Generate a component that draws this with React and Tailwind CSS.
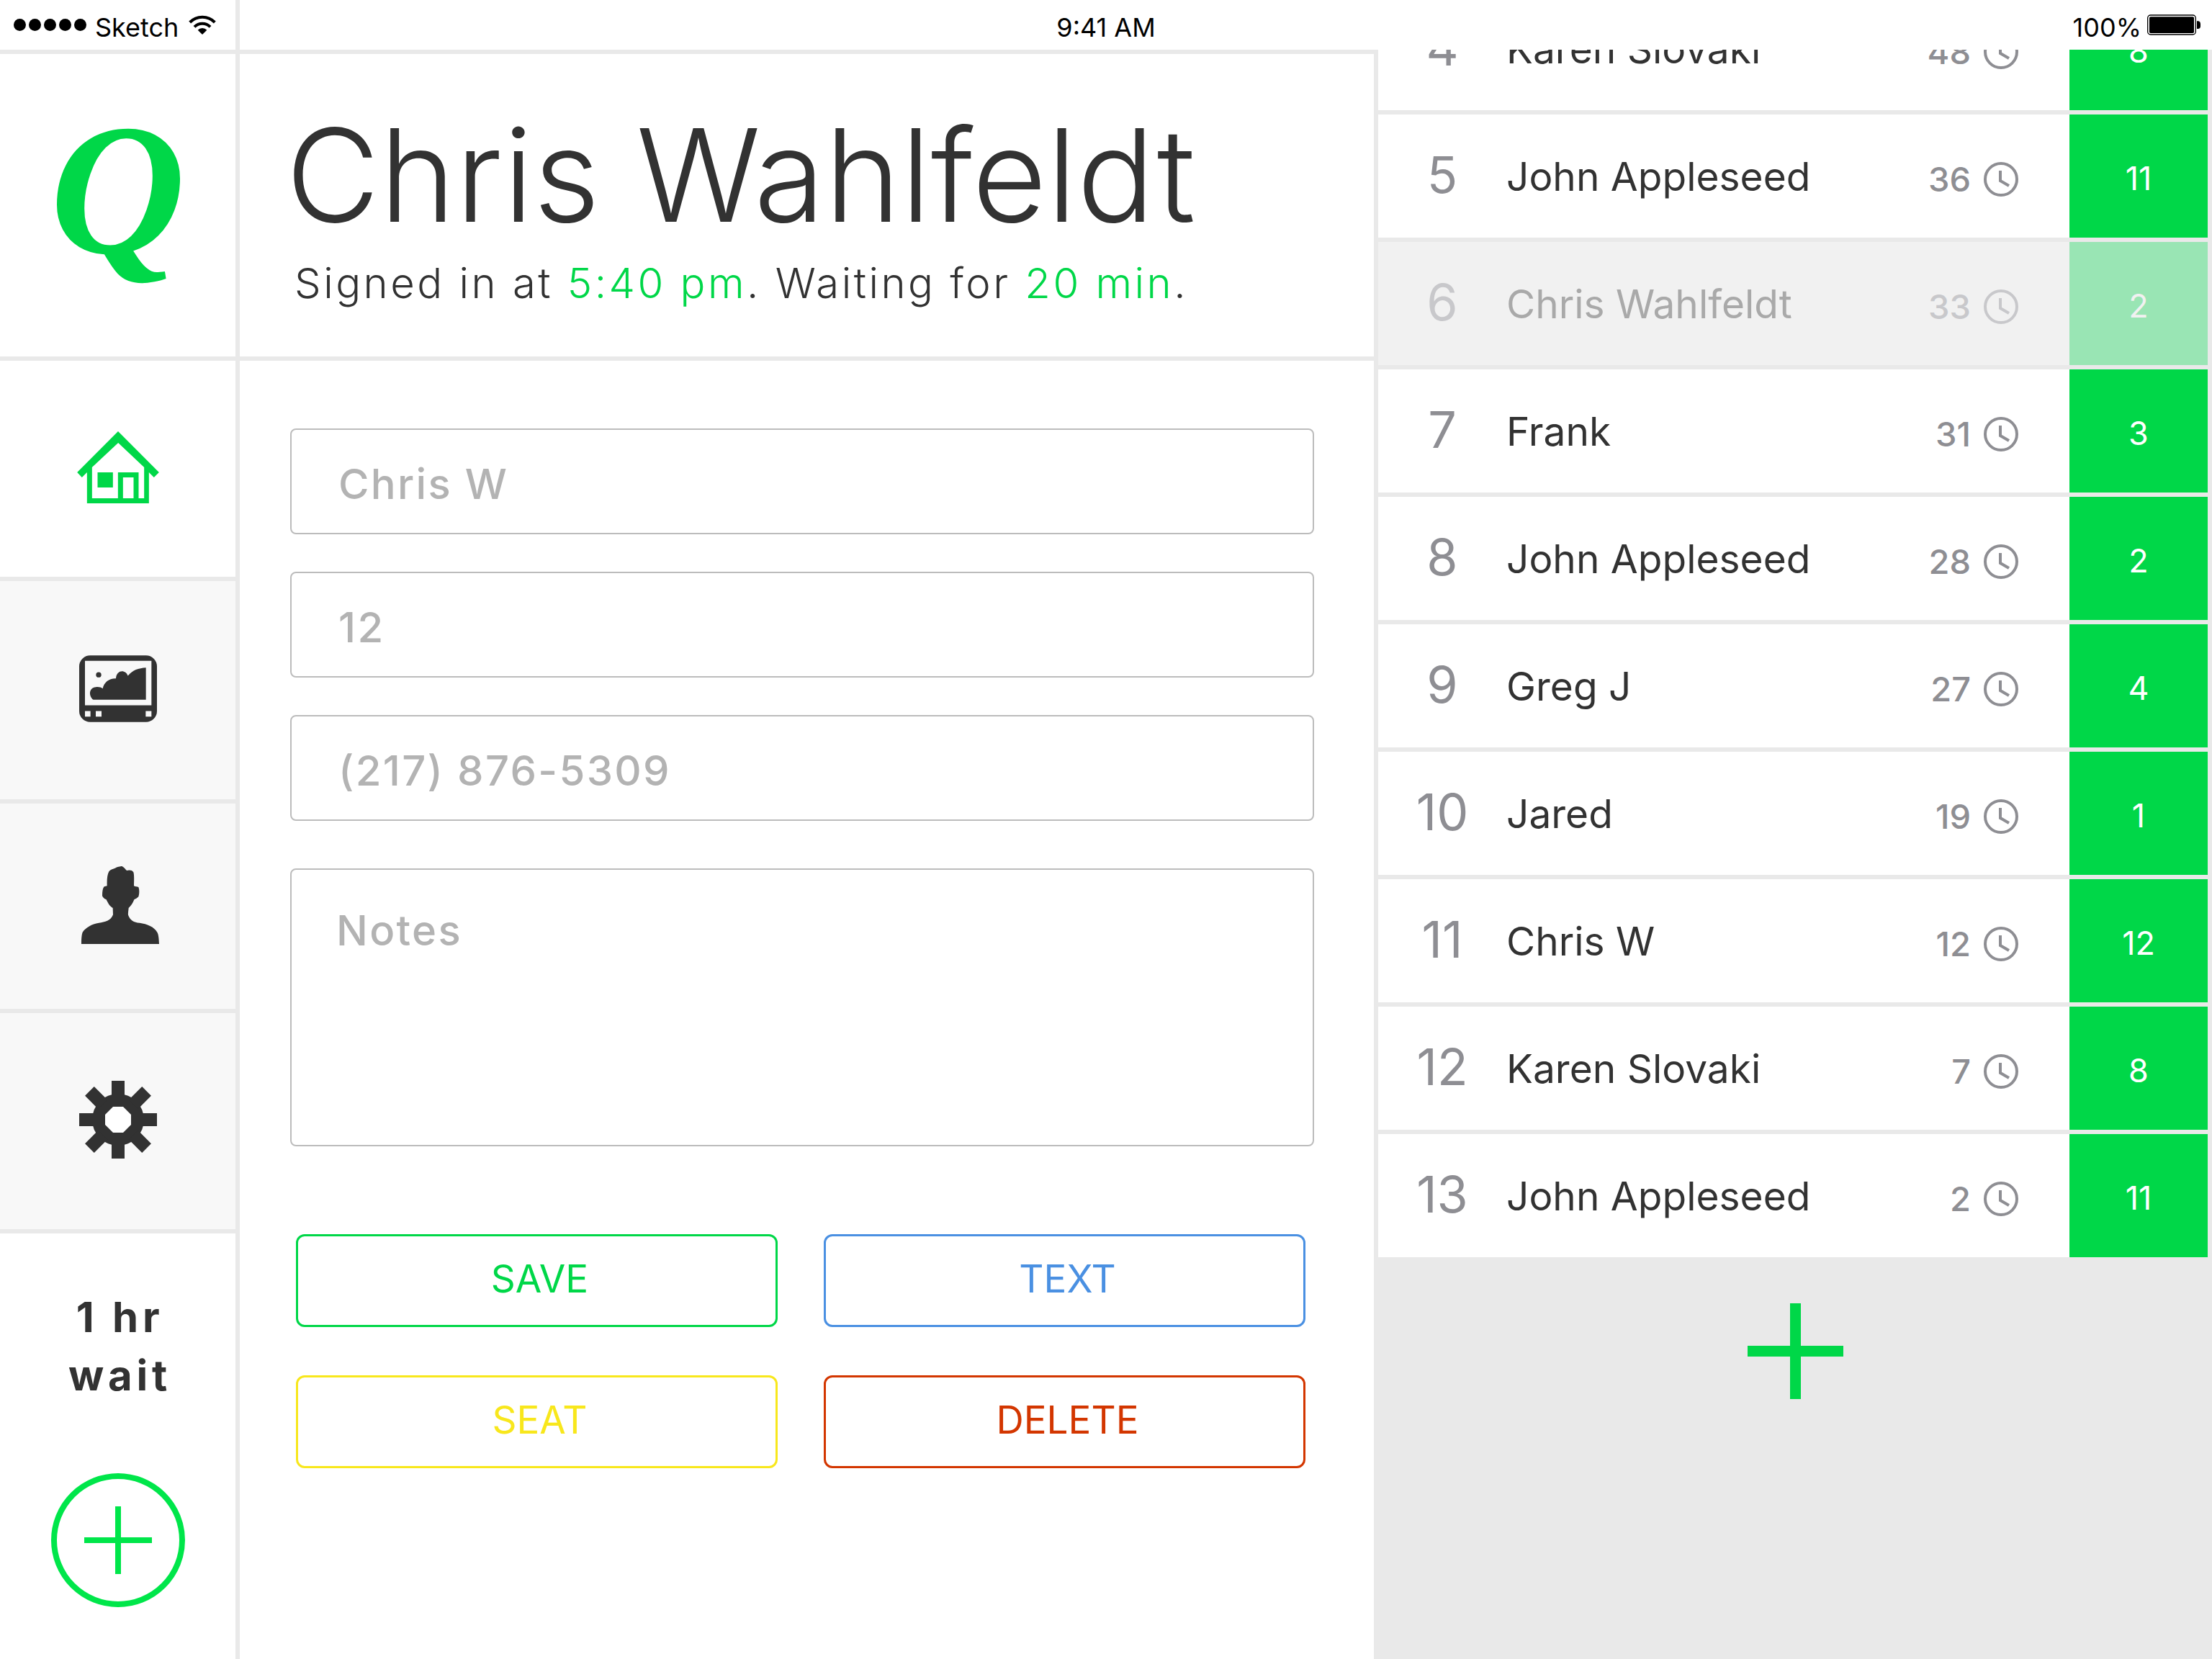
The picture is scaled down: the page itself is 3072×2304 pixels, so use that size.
const guests = [
  { place: 4, name: 'Karen Slovaki', wait: 48, party: 8 },
  { place: 5, name: 'John Appleseed', wait: 36, party: 11 },
  { place: 6, name: 'Chris Wahlfeldt', wait: 33, party: 2, selected: true },
  { place: 7, name: 'Frank', wait: 31, party: 3 },
  { place: 8, name: 'John Appleseed', wait: 28, party: 2 },
  { place: 9, name: 'Greg J', wait: 27, party: 4 },
  { place: 10, name: 'Jared', wait: 19, party: 1 },
  { place: 11, name: 'Chris W', wait: 12, party: 12 },
  { place: 12, name: 'Karen Slovaki', wait: 7, party: 8 },
  { place: 13, name: 'John Appleseed', wait: 2, party: 11 },
];

const fields = [
  { id: 'guest-name', label: 'Name', type: 'text', placeholder: 'Chris W' },
  { id: 'party-size', label: 'Party size', type: 'text', placeholder: '12' },
  { id: 'phone', label: 'Phone', type: 'tel', placeholder: '(217) 876-5309' },
];

const actions = [
  { label: 'SAVE', tone: 'border-[#00d748] text-[#00d748]' },
  { label: 'TEXT', tone: 'border-[#4a90e2] text-[#4a90e2]' },
  { label: 'SEAT', tone: 'border-[#f8e71c] text-[#f8e71c]' },
  { label: 'DELETE', tone: 'border-[#d33600] text-[#d33600]' },
];

function WifiIcon() {
  return (
    <svg viewBox="789 57 114 81" className="h-[27px] w-[38px]" fill="none" stroke="currentColor" strokeWidth="12" aria-hidden="true">
      <path d="M794 87A73 73 0 0 1 898 87" />
      <path d="M813 106A46 46 0 0 1 879 106" />
      <path d="M846 138L827 119A27 27 0 0 1 865 119Z" fill="currentColor" stroke="none" />
    </svg>
  );
}

function BatteryIcon() {
  return (
    <svg viewBox="366 57 222 87" className="h-[29px] w-[74px]" aria-hidden="true">
      <rect x="368" y="60" width="200" height="81" rx="12" fill="none" stroke="#000" strokeWidth="4" />
      <rect x="375" y="67" width="186" height="68" rx="5" />
      <path d="M573 85H580Q588 87 588 95V107Q588 115 580 117H573Z" />
    </svg>
  );
}

function HomeIcon() {
  return (
    <svg viewBox="316 120 341 300" className="h-[100px] w-[114px]" fill="currentColor" aria-hidden="true">
      <path
        fillRule="evenodd"
        d="M486.500 120L657 291L636 312L615 291V420H357V291L336 312L316 291ZM487 168L378 270V399H486V291H572V399H595V270ZM507 312H551V399H507Z"
      />
      <path d="M401 291H465V354H401Z" />
    </svg>
  );
}

function PictureIcon() {
  return (
    <svg viewBox="333 1065 324 278" className="h-[93px] w-[108px]" fill="currentColor" aria-hidden="true">
      <path
        fillRule="evenodd"
        d="M379 1065H611A46 46 0 0 1 657 1111V1297A46 46 0 0 1 611 1343H379A46 46 0 0 1 333 1297V1111A46 46 0 0 1 379 1065ZM357 1088V1273H634V1088ZM357 1297V1320H380V1297ZM402 1297V1320H426V1297ZM610 1297V1320H634V1297Z"
      />
      <circle cx="414" cy="1146" r="11" />
      <path d="M392 1250C372 1235 372 1200 402 1197C412 1195 424 1197 431 1203C436 1177 458 1160 486 1161C488 1124 526 1122 536 1150C556 1125 580 1118 611 1116V1250Z" />
    </svg>
  );
}

function PersonIcon() {
  return (
    <svg viewBox="54 60 342 324" className="h-[108px] w-[114px]" fill="currentColor" aria-hidden="true">
      <path d="M72 384C72 365 73 345 77 335C90 315 115 301 145 296C170 293 195 287 204 262L203 234C190 228 182 212 176 199C166 195 160 188 159 183C159 165 161 152 167 145L179 142C178 115 180 95 187 82C193 73 205 71 213 68C220 63 235 60 241 60C250 64 255 72 261 78C270 76 283 75 289 85C293 98 291 125 291 142C298 146 304 144 310 147C315 160 313 178 310 187C305 193 297 196 292 199C287 212 280 224 269 234C268 245 266 255 267 263C275 285 290 294 315 296C345 300 375 312 388 335C394 345 395 365 396 384Z" />
    </svg>
  );
}

function GearIcon() {
  return (
    <svg viewBox="-54 -54 108 108" className="size-[108px]" fill="currentColor" aria-hidden="true">
      <circle r="36" />
      {[0, 90, 180, 270].map((angle) => (
        <g key={angle} transform={`rotate(${angle})`}>
          <path d="M-9 -54H9V-30H-9Z" />
          <path d="M-9 -56H9V-30H-9Z" transform="rotate(45)" />
        </g>
      ))}
      <path d="M-7 -18H7L18 -7V7L7 18H-7L-18 7V-7Z" fill="#fff" />
    </svg>
  );
}

function ClockIcon() {
  return (
    <svg viewBox="-24 -24 48 48" className="size-[48px]" fill="none" stroke="currentColor" strokeWidth="4" aria-hidden="true">
      <circle r="22" />
      <path d="M-1 -12V2L11 9" />
    </svg>
  );
}

function StatusBar() {
  return (
    <header className="grid h-[69px] grid-cols-[1fr_auto_1fr] text-[36px] leading-none text-black">
      <div className="flex">
        <div className="flex w-[333px] items-center border-r-6 border-[#e9e9e9] pl-[19px]">
          <div className="flex gap-1">
            {[0, 1, 2, 3, 4].map((dot) => (
              <span key={dot} className="size-[17px] rounded-full bg-black" />
            ))}
          </div>
          <span className="mr-3.5 ml-3 pt-1.5">Sketch</span>
          <WifiIcon />
        </div>
      </div>
      <span className="self-center pt-1.5">9:41 AM</span>
      <div className="flex items-center justify-end gap-2 pr-4">
        <span className="pt-1.5">100%</span>
        <BatteryIcon />
      </div>
    </header>
  );
}

function NavItem({ label, height, active, children }) {
  return (
    <a
      href="#"
      aria-label={label}
      className={`flex items-center justify-center border-b-6 border-[#e9e9e9] pb-1 ${height} ${
        active ? 'bg-white text-[#00d748]' : 'bg-[#f8f8f8] text-[#323232]'
      }`}
    >
      {children}
    </a>
  );
}

function Sidebar() {
  return (
    <aside className="flex flex-col border-t-6 border-r-6 border-[#e9e9e9]">
      <a href="#" aria-label="Q home" className="flex h-[426px] items-center justify-center border-b-6 border-[#e9e9e9] pb-11">
        <span className="font-['Liberation_Serif',serif] text-[260px] leading-none font-bold text-[#00d748] italic">Q</span>
      </a>
      <nav className="flex flex-col">
        <NavItem label="Home" height="h-[306px]" active>
          <HomeIcon />
        </NavItem>
        <NavItem label="Display" height="h-[309px]">
          <PictureIcon />
        </NavItem>
        <NavItem label="Guests" height="h-[291px]">
          <PersonIcon />
        </NavItem>
        <NavItem label="Settings" height="h-[306px]">
          <GearIcon />
        </NavItem>
      </nav>
      <p className="pt-[76px] pl-1.5 text-center text-[58px] leading-[81px] font-bold tracking-widest">
        1 hr
        <br />
        wait
      </p>
      <button
        type="button"
        aria-label="Add guest"
        className="mt-[95px] flex size-[186px] items-center justify-center self-center rounded-full border-8 border-[#00e64a] text-[#00e64a]"
      >
        <svg viewBox="0 0 94 94" className="size-[94px]" stroke="currentColor" strokeWidth="8" aria-hidden="true">
          <path d="M47 0V94M0 47H94" />
        </svg>
      </button>
    </aside>
  );
}

function GuestDetails() {
  return (
    <main className="border-t-6 border-r-6 border-[#e9e9e9]">
      <section className="h-[426px] border-b-6 border-[#e9e9e9] px-[76px] pt-20 font-light">
        <h1 className="-ml-3 text-[179px] leading-[176px]">Chris Wahlfeldt</h1>
        <p className="mt-[22px] text-[58px] leading-[80px] tracking-[0.06em]">
          Signed in at <span className="text-[#00d748]">5:40 pm</span>. Waiting for{' '}
          <span className="text-[#00d748]">20 min</span>.
        </p>
      </section>
      <form className="flex flex-col pt-[94px] pr-[83px] pl-[70px]">
        <div className="flex flex-col gap-[52px] text-[58px] font-medium tracking-[0.04em]">
          {fields.map((field) => (
            <input
              key={field.id}
              id={field.id}
              type={field.type}
              aria-label={field.label}
              placeholder={field.placeholder}
              className="h-[147px] rounded-lg border-2 border-[#bcbcbc] bg-white px-[65px] pt-1.5 placeholder:text-[#b3b3b3]"
            />
          ))}
          <textarea
            id="notes"
            aria-label="Notes"
            placeholder="Notes"
            className="mt-3.5 h-[386px] resize-none rounded-lg border-2 border-[#bcbcbc] bg-white px-[62px] pt-11 leading-[80px] placeholder:text-[#b3b3b3]"
          />
        </div>
        <div className="mt-[122px] grid grid-cols-2 gap-x-16 gap-y-[67px] pr-3 pl-2">
          {actions.map((action) => (
            <button
              key={action.label}
              type="button"
              className={`h-[129px] rounded-[12px] border-3 pb-1 pl-2 text-[53px] ${action.tone}`}
            >
              {action.label}
            </button>
          ))}
        </div>
      </form>
    </main>
  );
}

function GuestRow({ guest }) {
  const muted = guest.selected;
  return (
    <li className={`flex h-[171px] items-center leading-none ${muted ? 'bg-[#f1f1f1]' : 'bg-white'}`}>
      <span className={`w-[178px] pb-1 text-center text-[70px] ${muted ? 'text-[#c8c8cb]' : 'text-[#8e8e93]'}`}>
        {guest.place}
      </span>
      <span className={`flex-1 pt-0.5 text-[55px] ${muted ? 'text-[#a9a9a9]' : 'text-[#323232]'}`}>{guest.name}</span>
      <span
        className={`flex items-center gap-[18px] pt-2 pr-[71px] text-[47px] font-medium ${
          muted ? 'text-[#c8c8cb]' : 'text-[#8e8e93]'
        }`}
      >
        {guest.wait}
        <ClockIcon />
      </span>
      <span
        className={`flex w-[192px] items-center justify-center self-stretch pt-1.5 text-[45px] ${
          muted ? 'bg-[#99e5b4] text-[#f1f1f1]' : 'bg-[#00d748] text-white'
        }`}
      >
        {guest.party}
      </span>
    </li>
  );
}

function Waitlist() {
  return (
    <aside className="flex flex-col overflow-hidden bg-[#e9e9e9]">
      <ul className="-mt-[87px] flex flex-col gap-1.5 pr-1.5">
        {guests.map((guest) => (
          <GuestRow key={guest.place} guest={guest} />
        ))}
      </ul>
      <button type="button" aria-label="Add to waitlist" className="mt-16 self-center text-[#00d748]">
        <svg viewBox="0 0 133 133" className="size-[133px]" stroke="currentColor" strokeWidth="15" aria-hidden="true">
          <path d="M66.500 0V133M0 66.500H133" />
        </svg>
      </button>
    </aside>
  );
}

export default function App() {
  return (
    <div className="flex min-h-screen flex-col bg-white font-['Inter',sans-serif] text-[#323232]">
      <StatusBar />
      <div className="grid flex-1 grid-cols-[333px_1581fr_1158fr]">
        <Sidebar />
        <GuestDetails />
        <Waitlist />
      </div>
    </div>
  );
}
